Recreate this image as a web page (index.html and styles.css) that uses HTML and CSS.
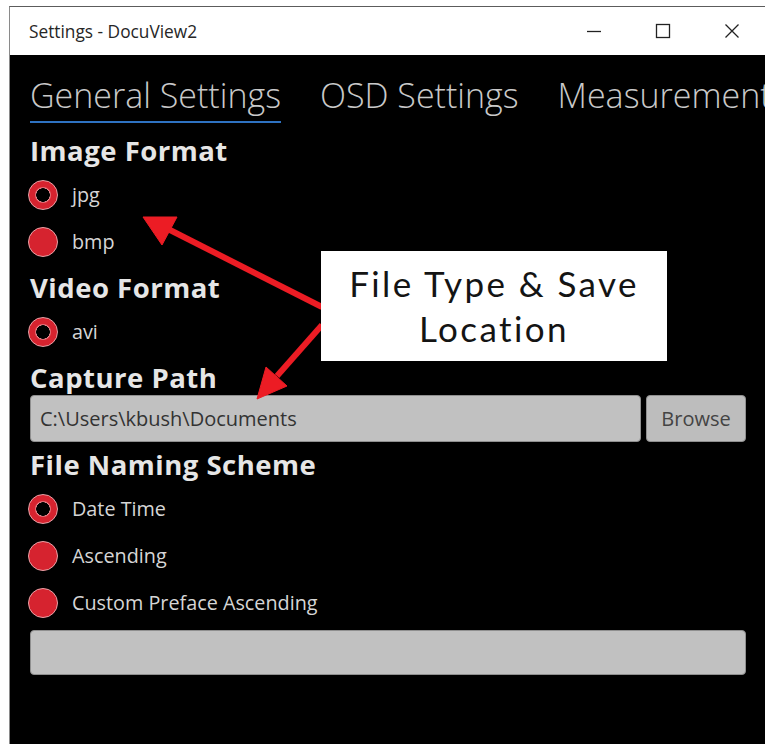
FILE: index.html
```html
<!DOCTYPE html>
<html lang="en">
<head>
<meta charset="utf-8">
<title>Settings - DocuView2</title>
<link rel="stylesheet" href="styles.css">
</head>
<body>
<div class="window">
  <header class="titlebar">
    <span class="title">Settings - DocuView2</span>
    <div class="caption-buttons">
      <span class="cap-btn"><svg width="16" height="16" viewBox="0 0 16 16"><path d="M1 8.5H15"/></svg></span>
      <span class="cap-btn"><svg width="16" height="16" viewBox="0 0 16 16"><rect x="1.5" y="1.5" width="13" height="13"/></svg></span>
      <span class="cap-btn"><svg width="16" height="16" viewBox="0 0 16 16"><path d="M1.5 1.5L14.5 14.5M14.5 1.5L1.5 14.5"/></svg></span>
    </div>
  </header>

  <main class="content">
    <nav class="tabs">
      <span class="tab active">General Settings</span>
      <span class="tab">OSD Settings</span>
      <span class="tab">Measurements</span>
    </nav>

    <section class="group first">
      <h2 class="group-title">Image Format</h2>
      <div class="options">
        <div class="option"><span class="radio checked"></span><span class="option-text">jpg</span></div>
        <div class="option"><span class="radio"></span><span class="option-text">bmp</span></div>
      </div>
    </section>

    <section class="group">
      <h2 class="group-title">Video Format</h2>
      <div class="options">
        <div class="option"><span class="radio checked"></span><span class="option-text">avi</span></div>
      </div>
    </section>

    <section class="group">
      <h2 class="group-title">Capture Path</h2>
      <div class="path-row">
        <div class="field">C:\Users\kbush\Documents</div>
        <div class="button">Browse</div>
      </div>
    </section>

    <section class="group">
      <h2 class="group-title">File Naming Scheme</h2>
      <div class="options">
        <div class="option"><span class="radio checked"></span><span class="option-text">Date Time</span></div>
        <div class="option"><span class="radio"></span><span class="option-text">Ascending</span></div>
        <div class="option"><span class="radio"></span><span class="option-text">Custom Preface Ascending</span></div>
      </div>
      <div class="field wide"></div>
    </section>
  </main>
</div>

<!-- annotation arrows pointing at the format options and the capture path -->
<svg class="arrows" width="765" height="744" viewBox="0 0 765 744">
  <g fill="#ec1c24" stroke="#ec1c24">
    <line x1="322" y1="307" x2="168" y2="229" stroke-width="6"/>
    <polygon points="143,217 177,217 162,245" stroke-width="1" stroke-linejoin="round"/>
    <line x1="322" y1="325" x2="277" y2="376" stroke-width="6"/>
    <polygon points="257,399 266,367 287,386" stroke-width="1" stroke-linejoin="round"/>
  </g>
</svg>

<div class="callout">
  <span>File Type &amp; Save</span>
  <span>Location</span>
</div>
</body>
</html>
```

FILE: styles.css
```css
* {
  box-sizing: border-box;
  margin: 0;
  padding: 0;
}

html,
body {
  width: 765px;
  height: 744px;
  overflow: hidden;
  background: #ffffff;
}

body {
  position: relative;
  font-family: "Open Sans", "Noto Sans", sans-serif;
}

/* window frame */
.window {
  margin: 6px 0 0 9px;
  width: 757px;
  height: 738px;
  display: flex;
  flex-direction: column;
  border-top: 1px solid #5c5c5c;
  border-left: 1px solid #8a8a8a;
  overflow: hidden;
}

.titlebar {
  height: 48px;
  flex: none;
  display: flex;
  align-items: center;
  background: #ffffff;
  padding-left: 19px;
}

.title {
  font-size: 17.3px;
  color: #262626;
}

.caption-buttons {
  margin-left: auto;
  display: flex;
}

.cap-btn {
  width: 69px;
  height: 48px;
  display: flex;
  align-items: center;
  justify-content: center;
}

.cap-btn svg {
  fill: none;
  stroke: #222222;
  stroke-width: 1.3;
}

/* settings body */
.content {
  flex: 1;
  background: #000000;
  padding: 0 20px;
  color: #dcdcdc;
}

/* the tab strip runs past the window edge, like the real pivot control */
.tabs {
  display: flex;
  gap: 39px;
  padding-top: 20px;
  white-space: nowrap;
}

.tab {
  font-size: 34px;
  font-weight: 300;
  line-height: 40px;
  color: #c9c9c9;
  padding-bottom: 6px;
  border-bottom: 2.5px solid transparent;
}

.tab.active {
  border-bottom-color: #2e72c2;
}

.group {
  display: flex;
  flex-direction: column;
}

.group-title {
  font-size: 27.5px;
  font-weight: 700;
  line-height: 30px;
  letter-spacing: 0.5px;
  color: #e6e6e6;
  margin-top: 8px;
}

.group.first .group-title {
  margin-top: 13px;
}

.options {
  margin-top: 5px;
  display: flex;
  flex-direction: column;
}

.option {
  height: 47px;
  display: flex;
  align-items: center;
  gap: 14px;
}

.radio {
  width: 30px;
  height: 30px;
  border-radius: 50%;
  background: #d6232f;
  border: 1.5px solid #e9a2a7;
  flex: none;
  margin-left: -2px;
}

.radio.checked {
  background: radial-gradient(circle, #000000 0 6.5px, #e78f95 7px, #d6232f 8.5px);
}

.option-text {
  font-size: 19.8px;
  color: #d6d6d6;
}

.path-row {
  margin-top: 2px;
  display: flex;
  gap: 5px;
  height: 47px;
}

.field {
  flex: 1;
  height: 47px;
  background: #c1c1c1;
  border: 1px solid #8f8f8f;
  border-radius: 4px;
  display: flex;
  align-items: center;
  padding-left: 9px;
  font-size: 20px;
  color: #333333;
}

.field.wide {
  flex: none;
  margin-top: 4px;
  height: 45px;
}

.button {
  width: 100px;
  background: #bdbdbd;
  border: 1px solid #8f8f8f;
  border-radius: 4px;
  display: flex;
  align-items: center;
  justify-content: center;
  font-size: 20px;
  color: #444444;
}

/* annotation layer */
.arrows {
  position: absolute;
  left: 0;
  top: 0;
  pointer-events: none;
}

.callout {
  position: absolute;
  left: 321px;
  top: 251px;
  width: 346px;
  height: 110px;
  background: #ffffff;
  display: flex;
  flex-direction: column;
  align-items: center;
  justify-content: center;
  font-family: "Lato", "DejaVu Sans", sans-serif;
  font-size: 35px;
  line-height: 45px;
  color: #141414;
  letter-spacing: 2.4px;
}
```
